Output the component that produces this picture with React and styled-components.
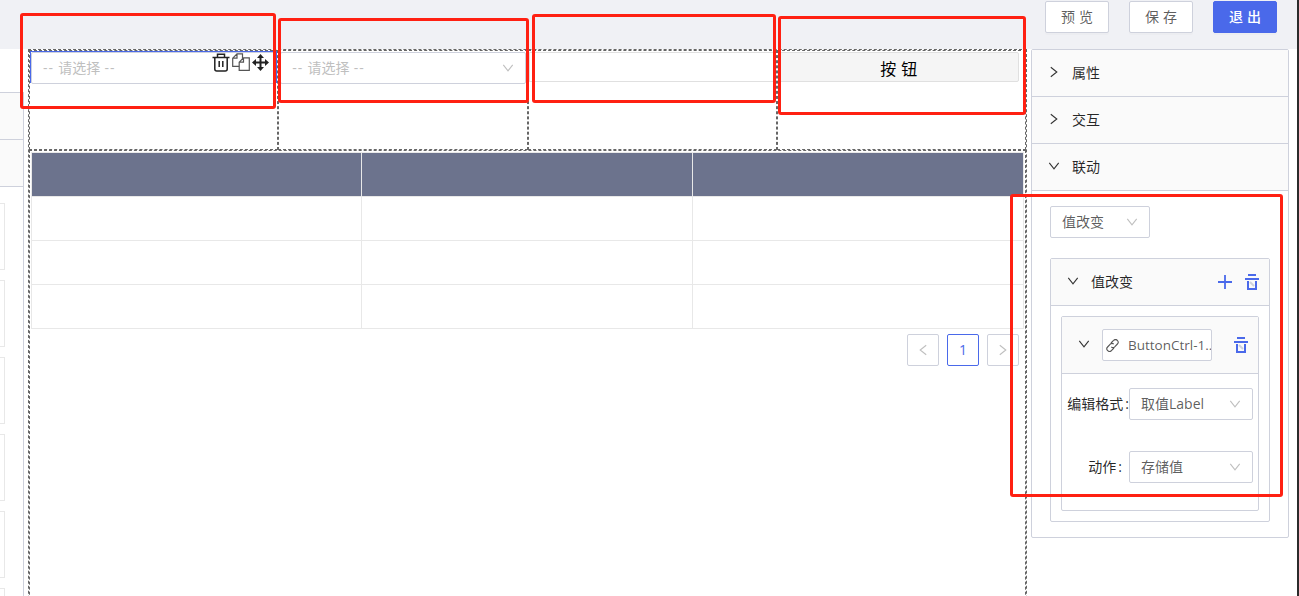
import React from "react";
import styled, { createGlobalStyle, css } from "styled-components";

const Global = createGlobalStyle`
  *, *::before, *::after { box-sizing: border-box; }
  body {
    margin: 0;
    overflow: hidden;
    background: #fff;
    color: rgba(0, 0, 0, 0.85);
    font: 14px/22px "Open Sans", "Noto Sans CJK SC", sans-serif;
  }
  svg { flex: none; }
`;

const dash = "1px dashed #666";
const line = "#ced1dc";
const blue = "#4a69ea";

const Page = styled.div`
  position: relative;
  width: 1299px;
  height: 596px;
  overflow: hidden;
  display: flex;
  flex-direction: column;
  border-right: 2px solid #2b2b2b;
`;

const TopBar = styled.header`
  flex: none;
  height: 49px;
  background: #f0f1f5;
  display: flex;
  justify-content: flex-end;
  gap: 20px;
  padding: 1px 20px 0 0;
`;

const Button = styled.button`
  width: 64px;
  height: 32px;
  padding: 0;
  font: inherit;
  letter-spacing: 4px;
  text-indent: 4px;
  border-radius: 2px;
  border: 1px solid ${(p) => (p.$primary ? blue : line)};
  background: ${(p) => (p.$primary ? blue : "#fff")};
  color: ${(p) => (p.$primary ? "#fff" : "rgba(0,0,0,0.65)")};
  font-weight: ${(p) => (p.$primary ? 500 : 400)};
  box-shadow: 0 2px 0 rgba(0, 0, 0, 0.016);
`;

const Body = styled.main`
  flex: 1;
  min-height: 0;
  display: flex;
`;

const Library = styled.aside`
  flex: none;
  width: 24px;
  margin-right: 4px;
  padding-top: 43px;
`;

const LibraryInner = styled.div`
  height: 504px;
  border-right: 1px solid ${line};
  overflow: hidden;
`;

const LibraryRow = styled.div`
  height: 47px;
  border-top: 1px solid ${line};
  background: #fafafa;
`;

const LibraryList = styled.div`
  border-top: 1px solid ${line};
  padding-top: 16px;
  display: flex;
  flex-direction: column;
  gap: 10px;
`;

const LibraryCard = styled.div`
  flex: none;
  width: 5px;
  height: 67px;
  border: 1px solid #e8e8e8;
  border-left: 0;
`;

const Canvas = styled.section`
  flex: none;
  width: 999px;
  height: 620px;
  border: ${dash};
  margin-right: 4px;
`;

const CellRow = styled.div`
  height: 100px;
  display: flex;
`;

const Cell = styled.div`
  flex: 1;
  min-width: 0;
  border: ${dash};
  padding: 1px 1px 0;
`;

const Select = styled.div`
  width: ${(p) => p.$width || "auto"};
  height: 32px;
  display: flex;
  align-items: center;
  justify-content: space-between;
  padding: 0 11px;
  border: 1px solid ${line};
  border-radius: 2px;
  background: #fff;
  color: ${(p) => (p.$placeholder ? "#bfbfbf" : "rgba(0,0,0,0.65)")};
`;

const Placeholder = styled.span`
  word-spacing: 0.6px;
  i {
    font-style: normal;
    letter-spacing: 1px;
  }
`;

const Selected = styled.div`
  height: 32px;
  margin: 0 -1px 0 -1px;
  position: relative;
  top: -1px;
  border: 1px solid ${blue};
  border-bottom: 0;

  ${Select} { padding-right: 6px; }
`;

const Tools = styled.span`
  display: flex;
  align-items: center;
  gap: 2px;
  height: 20px;
  margin-top: -12px;
`;

const InputBox = styled.div`
  height: 30px;
  margin-left: -1px;
  border: 1px solid #e0e0e0;
`;

const FlatButton = styled.div`
  height: 30px;
  margin-right: 5px;
  border: 1px solid #e0e0e0;
  border-radius: 2px;
  background: #f5f5f5;
  color: #000;
  font-size: 16px;
  line-height: 32px;
  letter-spacing: 5px;
  text-indent: 5px;
  text-align: center;
`;

const TableBlock = styled.div`
  height: 520px;
  border: ${dash};
  padding: 1px 1px 0;
`;

const Grid = styled.div`
  display: grid;
  grid-template-columns: 330px 331px 1fr;
  border: 1px solid #e8e8e8;
  border-bottom: 0;
`;

const GridCell = styled.div`
  height: 44px;
  border-bottom: 1px solid #e8e8e8;
  border-right: 1px solid #e8e8e8;
  &:nth-child(3n) { border-right: 0; }
  ${(p) => p.$head && css`background: #6c738d;`}
`;

const Pager = styled.div`
  display: flex;
  justify-content: flex-end;
  gap: 8px;
  padding: 5px 5px 0 0;
`;

const PageItem = styled.div`
  width: 32px;
  height: 32px;
  display: flex;
  align-items: center;
  justify-content: center;
  border: 1px solid ${(p) => (p.$active ? blue : line)};
  border-radius: 2px;
  color: ${(p) => (p.$active ? blue : "#bfbfbf")};
`;

const Panel = styled.aside`
  flex: none;
  width: 258px;
  height: 489px;
  border: 1px solid ${line};
  border-radius: 2px;
`;

const SectionHead = styled.div`
  display: flex;
  align-items: center;
  gap: 12px;
  height: ${(p) => p.$height || 47}px;
  padding: 0 ${(p) => p.$endPad || 16}px 0 16px;
  border-bottom: 1px solid ${line};
  background: #fafafa;

  > svg { margin-bottom: 2px; }
`;

const PanelBody = styled.div`
  padding: 15px 18px 0;
`;

const EventBox = styled.div`
  height: 264px;
  margin-top: 20px;
  border: 1px solid ${line};
  border-radius: 2px;
`;

const ActionBox = styled.div`
  height: 195px;
  margin: 10px 10px 0;
  border: 1px solid ${line};
  border-radius: 2px;
`;

const Actions = styled.span`
  margin-left: auto;
  display: flex;
  align-items: center;
  gap: 13px;
  color: ${blue};
`;

const LinkField = styled.div`
  width: 110px;
  height: 32px;
  display: flex;
  align-items: center;
  gap: 9px;
  padding-left: 3px;
  border: 1px solid ${line};
  border-radius: 2px;
  background: #fff;
  color: rgba(0, 0, 0, 0.65);
  font-size: 13.5px;
  white-space: nowrap;
  overflow: hidden;
`;

const Field = styled.div`
  display: flex;
  align-items: center;
  justify-content: flex-end;
  padding-right: 5px;
  margin-top: ${(p) => p.$top}px;
`;

const Label = styled.span`
  white-space: nowrap;
  margin-right: ${(p) => p.$gap || 0}px;
  &::after {
    content: ":";
    margin-left: 2px;
  }
`;

const Mark = styled.div`
  position: absolute;
  left: ${(p) => p.$x}px;
  top: ${(p) => p.$y}px;
  width: ${(p) => p.$w}px;
  height: ${(p) => p.$h}px;
  border: 3px solid #ff2012;
  border-radius: 3px;
`;

const turns = { down: 0, right: -90, left: 90 };

const Chevron = ({ dir = "down", color = "rgba(0,0,0,.8)" }) => (
  <svg width="12" height="12" viewBox="0 0 12 12" fill="none" stroke={color} strokeWidth="1.1">
    <path d="M1.300 2.800 6 8.800l4.700-6" transform={`rotate(${turns[dir]} 6 6)`} />
  </svg>
);

const BlueTrash = () => (
  <svg width="14" height="16" viewBox="0 0 14 16" fill="none" stroke={blue} strokeWidth="2">
    <path d="M3 1h8M0 5h14M3 7v8h8V7" />
    <path d="m5 8 4 4" stroke="#ccd0dc" />
  </svg>
);

const Plus = () => (
  <svg width="14" height="14" viewBox="0 0 14 14" stroke={blue} strokeWidth="1.8">
    <path d="M7 0v14M0 7h14" />
  </svg>
);

const LinkIcon = () => (
  <svg width="13" height="13" viewBox="0 0 13 13" fill="none" stroke="#555" strokeWidth="1.1">
    <path d="m5 4 2.600-2.600a2.400 2.400 0 0 1 3.800 3.600L8.700 7.900a2.400 2.400 0 0 1-3.400 0" />
    <path d="M8 9 5.400 11.600a2.400 2.400 0 0 1-3.800-3.600l2.700-2.900a2.400 2.400 0 0 1 3.400 0" />
  </svg>
);

const TrashIcon = () => (
  <svg width="18" height="19" viewBox="0 0 18 19" fill="none" stroke="#222" strokeWidth="1.5">
    <path d="M.5 4.500h17M5.500 4V1.200h7V4M2.800 5v11q0 2 2 2h8.400q2 0 2-2V5M7.200 8v6M10.800 8v6" />
  </svg>
);

const CopyIcon = () => (
  <svg width="18" height="18" viewBox="0 0 18 18" fill="#fff" stroke="#555" strokeWidth="1.2">
    <path d="M5 .8h5.500v12.500H.7V5.200zM5 .8v4.400H.7" />
    <path d="M11.500 4.800h5.800v12.500H7.200V9.200zM11.500 4.800v4.400H7.200" />
  </svg>
);

const MoveIcon = () => (
  <svg width="17" height="17" viewBox="0 0 17 17" fill="#222">
    <path d="M8.500 0 12 4H9.500v3.500H13V5l4 3.500-4 3.500V9.500H9.500V13H12l-3.500 4L5 13h2.500V9.500H4V12L0 8.500 4 5v2.500h3.500V4H5z" />
  </svg>
);

const Hint = () => (
  <Placeholder><i>--</i> 请选择 <i>--</i></Placeholder>
);

const marks = [
  [20, 13, 256, 96],
  [278, 18, 251, 85],
  [532, 14, 244, 89],
  [778, 16, 248, 99],
  [1010, 194, 273, 303],
];

export default function App() {
  return (
    <>
      <Global />
      <Page>
        <TopBar>
          <Button>预览</Button>
          <Button>保存</Button>
          <Button $primary>退出</Button>
        </TopBar>
        <Body>
          <Library>
            <LibraryInner>
              <LibraryRow />
              <LibraryRow />
              <LibraryList>
                {[0, 1, 2, 3, 4, 5].map((n) => <LibraryCard key={n} />)}
              </LibraryList>
            </LibraryInner>
          </Library>
          <Canvas>
            <CellRow>
              <Cell>
                <Selected>
                  <Select $placeholder>
                    <Hint />
                    <Tools><TrashIcon /><CopyIcon /><MoveIcon /></Tools>
                  </Select>
                </Selected>
              </Cell>
              <Cell>
                <Select $placeholder><Hint /><Chevron color="#bfbfbf" /></Select>
              </Cell>
              <Cell><InputBox /></Cell>
              <Cell><FlatButton>按钮</FlatButton></Cell>
            </CellRow>
            <TableBlock>
              <Grid>
                {Array.from({ length: 12 }, (_, i) => <GridCell key={i} $head={i < 3} />)}
              </Grid>
              <Pager>
                <PageItem><Chevron dir="left" color="#bfbfbf" /></PageItem>
                <PageItem $active>1</PageItem>
                <PageItem><Chevron dir="right" color="#bfbfbf" /></PageItem>
              </Pager>
            </TableBlock>
          </Canvas>
          <Panel>
            <SectionHead><Chevron dir="right" />属性</SectionHead>
            <SectionHead><Chevron dir="right" />交互</SectionHead>
            <SectionHead><Chevron />联动</SectionHead>
            <PanelBody>
              <Select $width="100px">值改变<Chevron color="#bfbfbf" /></Select>
              <EventBox>
                <SectionHead $endPad={10}>
                  <Chevron />值改变
                  <Actions><Plus /><BlueTrash /></Actions>
                </SectionHead>
                <ActionBox>
                  <SectionHead $height={57} $endPad={10}>
                    <Chevron />
                    <LinkField><LinkIcon />ButtonCtrl-1..</LinkField>
                    <Actions><BlueTrash /></Actions>
                  </SectionHead>
                  <Field $top={14}>
                    <Label>编辑格式</Label>
                    <Select $width="124px">取值Label<Chevron color="#bfbfbf" /></Select>
                  </Field>
                  <Field $top={31}>
                    <Label $gap={7}>动作</Label>
                    <Select $width="124px">存储值<Chevron color="#bfbfbf" /></Select>
                  </Field>
                </ActionBox>
              </EventBox>
            </PanelBody>
          </Panel>
        </Body>
        {marks.map(([x, y, w, h]) => <Mark key={x} $x={x} $y={y} $w={w} $h={h} />)}
      </Page>
    </>
  );
}
